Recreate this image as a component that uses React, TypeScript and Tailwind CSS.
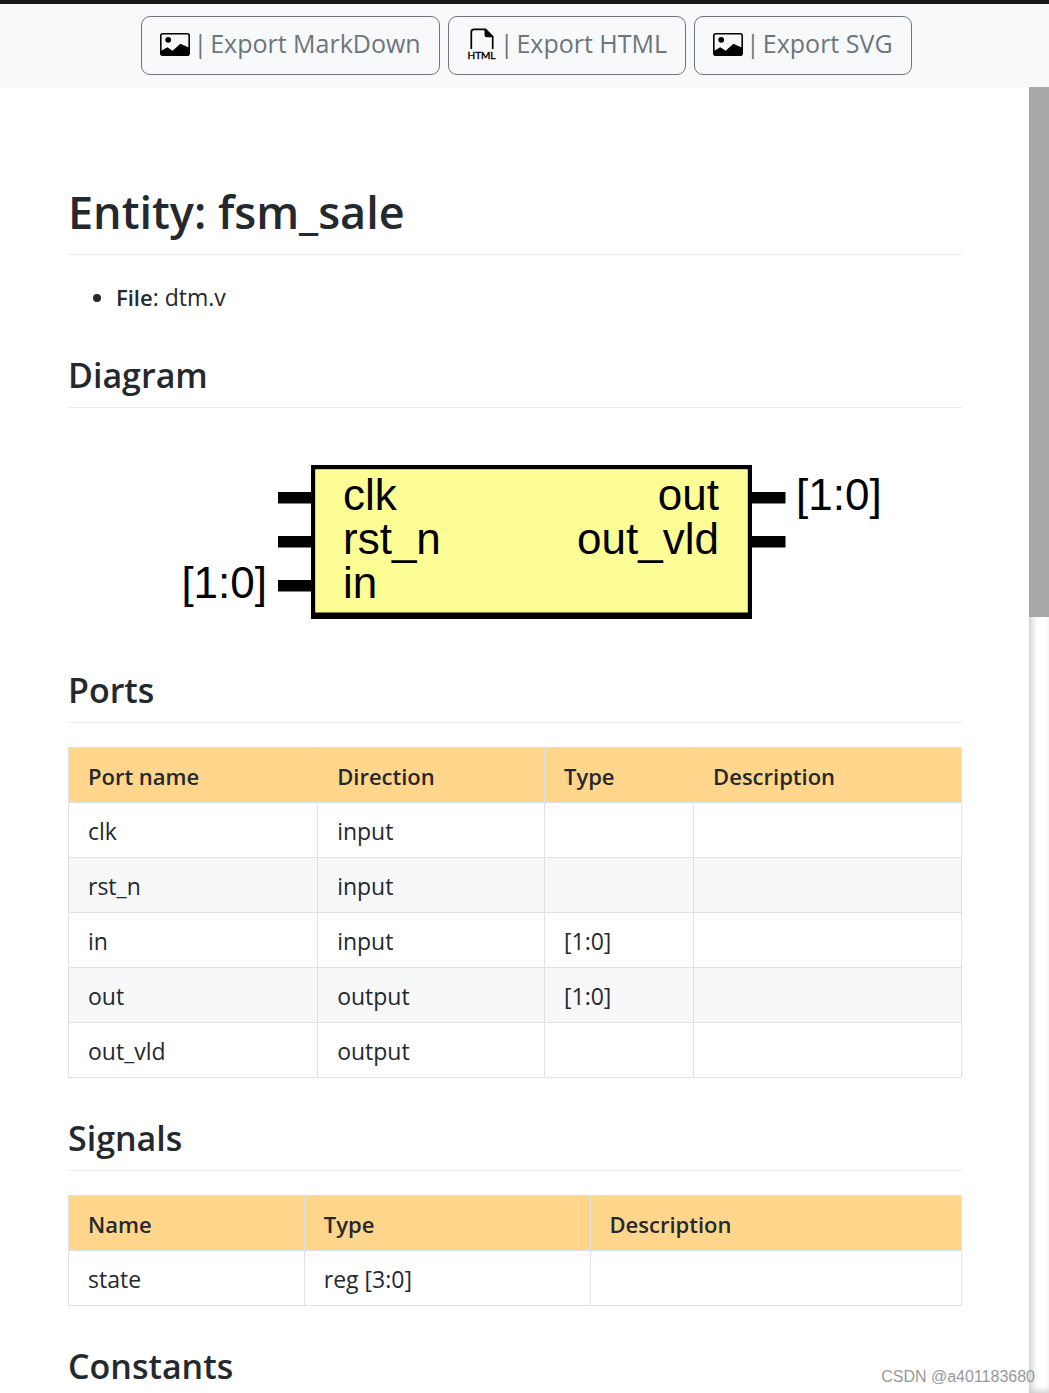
import type { ReactNode } from "react";

type Column = { label: string; width: string };

const portColumns: Column[] = [
  { label: "Port name", width: "w-[27.9%]" },
  { label: "Direction", width: "w-[25.4%]" },
  { label: "Type", width: "w-[16.7%]" },
  { label: "Description", width: "w-[30%]" },
];

const portRows = [
  ["clk", "input", "", ""],
  ["rst_n", "input", "", ""],
  ["in", "input", "[1:0]", ""],
  ["out", "output", "[1:0]", ""],
  ["out_vld", "output", "", ""],
];

const signalColumns: Column[] = [
  { label: "Name", width: "w-[26.4%]" },
  { label: "Type", width: "w-[32%]" },
  { label: "Description", width: "w-[41.6%]" },
];

const signalRows = [["state", "reg [3:0]", ""]];

function ImageIcon() {
  return (
    <svg viewBox="0 0 30 23" className="h-[23px] w-[30px]" aria-hidden="true">
      <rect x="0.8" y="0.8" width="28.4" height="21.4" rx="2" fill="none" stroke="#000" strokeWidth="1.6" />
      <circle cx="8.2" cy="6.8" r="2.9" />
      <path d="M0.8 18 7.3 14.2 12.6 17.7 20.4 10.8 29.2 14.8V20.5Q29.2 22.5 27.2 22.5H2.8Q0.8 22.5 0.8 20.5Z" />
    </svg>
  );
}

function HtmlIcon() {
  return (
    <svg viewBox="-1 0 30 32" className="h-8 w-[30px]" aria-hidden="true">
      <path d="M3.3 21V4Q3.3 1.3 6 1.3H17.5L24.700 8.500V21" fill="none" stroke="#000" strokeWidth="1.7" />
      <path d="M16.500 1 25.500 9.300H19Q16.500 9.300 16.500 6.800Z" />
      <text
        x="13.5"
        y="30.5"
        textAnchor="middle"
        stroke="#000"
        strokeWidth="0.4"
        className="font-['Lato',sans-serif] text-[10px]"
      >
        HTML
      </text>
    </svg>
  );
}

function ExportButton({ icon, label }: { icon: ReactNode; label: string }) {
  return (
    <button
      type="button"
      className="flex h-[59px] items-center gap-[3px] rounded-[9px] border border-[#6c757d] px-[18px] pb-[3px] text-[25px] whitespace-nowrap text-[#6c757d]"
    >
      {icon}
      <span>|</span>
      <span>{label}</span>
    </button>
  );
}

function SectionTitle({ children }: { children: ReactNode }) {
  return (
    <h2 className="mt-9 mb-6 border-b border-[#eaecef] pb-[7px] text-[34px] leading-[49px] font-semibold">
      {children}
    </h2>
  );
}

function DocTable({ columns, rows }: { columns: Column[]; rows: string[][] }) {
  return (
    <table className="w-full table-fixed border-collapse">
      <thead>
        <tr className="bg-[#ffd68c]">
          {columns.map((col) => (
            <th
              key={col.label}
              className={`border border-[#dfe2e5] px-[19px] pt-[10px] pb-2 text-left text-[22px] font-semibold ${col.width}`}
            >
              {col.label}
            </th>
          ))}
        </tr>
      </thead>
      <tbody>
        {rows.map((row) => (
          <tr key={row[0]} className="bg-white even:bg-[#f6f8fa]">
            {row.map((cell, i) => (
              <td key={i} className="h-[55px] border border-[#dfe2e5] px-[19px] pt-[10px] pb-2">
                {cell}
              </td>
            ))}
          </tr>
        ))}
      </tbody>
    </table>
  );
}

function EntityDiagram() {
  return (
    <svg
      viewBox="0 0 894 198"
      className="block w-full font-['Liberation_Sans',Arial,sans-serif] text-[44px]"
      role="img"
      aria-label="fsm_sale"
    >
      <rect x="243" y="33" width="441" height="154" />
      <rect x="247.2" y="37.2" width="432.6" height="143.3" fill="#fdfd96" />
      <rect x="210" y="60" width="33" height="11.5" />
      <rect x="210" y="104" width="33" height="11.5" />
      <rect x="210" y="148" width="33" height="11.5" />
      <rect x="684" y="60" width="33.5" height="11.5" />
      <rect x="684" y="104" width="33.5" height="11.5" />
      <text x="275" y="78">clk</text>
      <text x="275" y="122">rst_n</text>
      <text x="275" y="166">in</text>
      <text x="199" y="166" textAnchor="end">[1:0]</text>
      <text x="651" y="78" textAnchor="end">out</text>
      <text x="651" y="122" textAnchor="end">out_vld</text>
      <text x="728" y="78">[1:0]</text>
    </svg>
  );
}

export default function App() {
  return (
    <div className="relative flex h-screen flex-col overflow-hidden bg-white font-['Open_Sans',sans-serif] text-[#24292e]">
      <header className="flex shrink-0 justify-center gap-2 border-t-4 border-[#181818] bg-[#f8f9fb] py-3 pl-1">
        <ExportButton icon={<ImageIcon />} label="Export MarkDown" />
        <ExportButton icon={<HtmlIcon />} label="Export HTML" />
        <ExportButton icon={<ImageIcon />} label="Export SVG" />
      </header>

      <div className="flex min-h-0 flex-1">
        <main className="min-w-0 flex-1 overflow-hidden pt-[93px] pr-[67px] pl-[68px] text-[23px] leading-9">
          <h1 className="mb-6 border-b border-[#eaecef] pb-[10px] text-[45px] leading-[64px] font-semibold">
            Entity: fsm_sale
          </h1>
          <ul className="list-disc pl-12">
            <li>
              <strong className="text-[22px] font-semibold">File</strong>: dtm.v
            </li>
          </ul>

          <SectionTitle>Diagram</SectionTitle>
          <EntityDiagram />

          <SectionTitle>Ports</SectionTitle>
          <DocTable columns={portColumns} rows={portRows} />

          <SectionTitle>Signals</SectionTitle>
          <DocTable columns={signalColumns} rows={signalRows} />

          <SectionTitle>Constants</SectionTitle>
        </main>

        <div className="w-5 shrink-0 bg-white shadow-[inset_3px_-2px_7px_#ccc]">
          <div className="h-[40.6%] bg-[#a9a9a9]" />
        </div>
      </div>

      <p className="absolute right-[14px] bottom-1 font-['Liberation_Sans',Arial,sans-serif] text-base text-[#999]">
        CSDN @a401183680
      </p>
    </div>
  );
}
